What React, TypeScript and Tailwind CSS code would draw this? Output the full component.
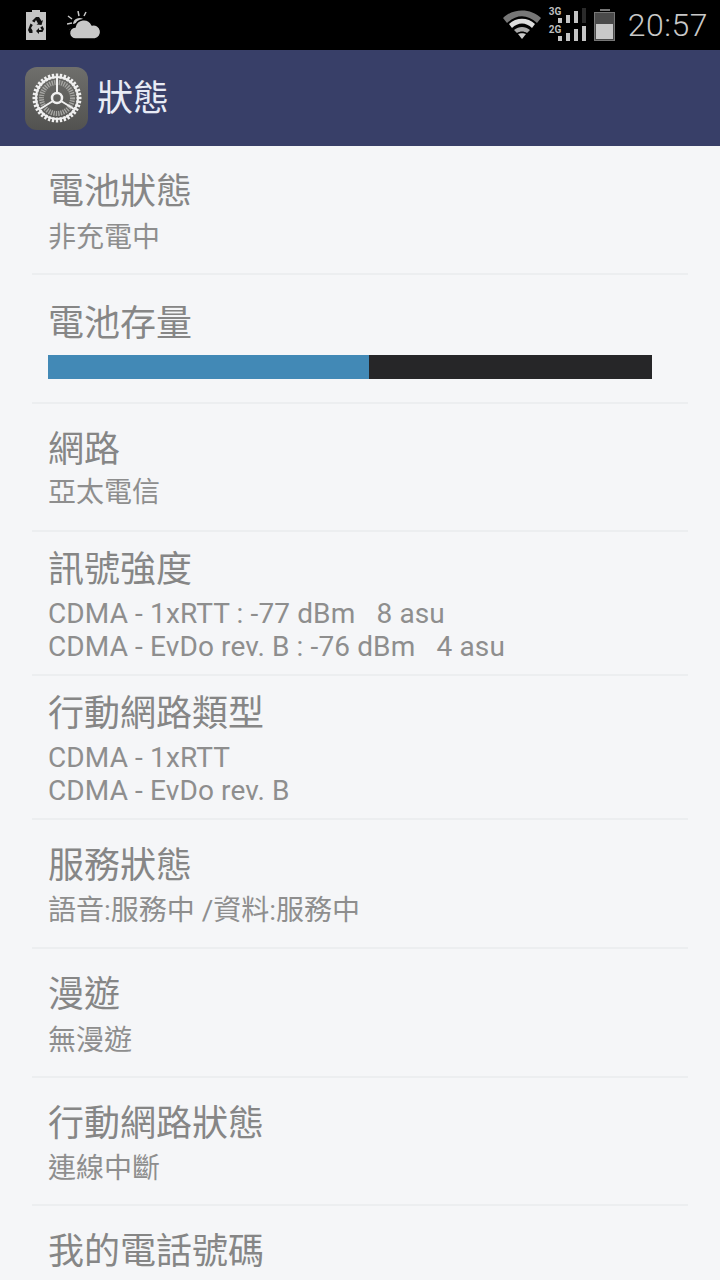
import React from "react";

const sans = "font-['Roboto','Noto_Sans_CJK_TC',sans-serif]";

type Row = { title: string; lines?: string[]; level?: number; box: string; gap?: string; latin?: boolean };

const rows: Row[] = [
  { title: "電池狀態", lines: ["非充電中"], box: "h-[129px] pt-[26px]", gap: "mt-[9px]" },
  { title: "電池存量", level: 53.2, box: "h-[129px] pt-[29px]", gap: "mt-[11px]" },
  { title: "網路", lines: ["亞太電信"], box: "h-[128px] pt-[26px]", gap: "mt-[6px]" },
  {
    title: "訊號強度",
    lines: ["CDMA - 1xRTT : -77 dBm\u00a0\u00a0\u00a08 asu", "CDMA - EvDo rev. B : -76 dBm\u00a0\u00a0\u00a04 asu"],
    box: "h-[144px] pt-[18px]",
    gap: "mt-[7px]",
    latin: true,
  },
  {
    title: "行動網路類型",
    lines: ["CDMA - 1xRTT", "CDMA - EvDo rev. B"],
    box: "h-[144px] pt-[18px]",
    gap: "mt-[7px]",
    latin: true,
  },
  { title: "服務狀態", lines: ["語音:服務中 /資料:服務中"], box: "h-[129px] pt-[26px]", gap: "mt-[8px]" },
  { title: "漫遊", lines: ["無漫遊"], box: "h-[129px] pt-[26px]", gap: "mt-[9px]" },
  { title: "行動網路狀態", lines: ["連線中斷"], box: "h-[128px] pt-[26px]", gap: "mt-[8px]" },
  { title: "我的電話號碼", box: "h-[75px] pt-[26px]" },
];

function RecycleBattery() {
  return (
    <svg width="20" height="30" viewBox="0 0 20 30">
      <path d="M6 0h8v2h6v28H0V2h6z" fill="#c4c4c4" />
      <path
        d="M10 7l3 0 2.5 4 1.5-1-1.5 5-5-.5 1.5-1-2-3.5-1.5 2.5-2.5-1.5zM16.5 16l1.5 3-1.5 3H13v2l-3-3 3-3v2h2.8l-1.5-2.5zM4.5 13.5L6.8 15 5 18l1.5 2.5V23H3.5L2 20z"
        fill="#111"
      />
    </svg>
  );
}

function Weather() {
  return (
    <svg width="35" height="29" viewBox="0 0 35 29">
      <g stroke="#c8c8c8" strokeWidth="1.5">
        <path d="M11 0l1 5M1 5l4 3M0 13l5-1M19 1l-2 4M3 19l4-2" />
      </g>
      <path d="M6 13a6.5 6.5 0 0 1 12-3z" fill="#c8c8c8" />
      <path d="M9 28a6 6 0 0 1 -1-12 9 9 0 0 1 17-2 7 7 0 0 1 3 14z" fill="#c8c8c8" stroke="#000" strokeWidth="1.5" />
    </svg>
  );
}

function Wifi() {
  return (
    <svg width="38" height="30" viewBox="0 0 38 30">
      <path d="M0 8C10-2 28-2 38 8l-4 5C24 4 14 4 4 13z" fill="#777" />
      <path d="M6 14C13 7 25 7 32 14l-3 4C23 12 15 12 9 18z" fill="#ddd" />
      <path d="M11 20c5-4 11-4 16 0l-3 3c-3-2-7-2-10 0z" fill="#aaa" />
      <path d="M15 24c2-1 6-1 8 0l-4 5z" fill="#ccc" />
    </svg>
  );
}

function Signal({ label, faded }: { label: string; faded?: boolean }) {
  const bars = [5, 8, 12, 15];
  return (
    <div className="relative w-[37px] h-[15px]">
      <span className="absolute left-0 top-[-1px] text-[10px] leading-[10px] font-bold text-[#bdbdbd] font-['Roboto',sans-serif]">
        {label}
      </span>
      <div className="absolute right-0 bottom-0 flex items-end gap-[4px]">
        {bars.map((b, i) => (
          <div
            key={b}
            className={faded && i === 3 ? "w-[4px] bg-[#2a2a2a]" : "w-[4px] bg-[#c4c4c4]"}
            style={{ height: b }}
          />
        ))}
      </div>
    </div>
  );
}

function Battery() {
  return (
    <div className="flex flex-col items-center w-[22px]">
      <div className="w-[10px] h-[2px] bg-[#777]" />
      <div className="w-[21px] h-[29px] mt-[1px] border border-[#777] flex flex-col justify-end bg-[#4a4a4a] p-[1px]">
        <div className="h-[15px] bg-[#c8c8c8]" />
      </div>
    </div>
  );
}

function GearIcon() {
  const teeth = Array.from({ length: 36 }, (_, i) => i * 10);
  return (
    <div className="w-[63px] h-[63px] rounded-[12px] bg-gradient-to-b from-[#6f6f6c] to-[#525250] flex items-center justify-center">
      <svg width="50" height="50" viewBox="0 0 50 50">
        {teeth.map((a) => (
          <rect key={a} x="23.8" y="0.5" width="2.4" height="5" fill="#f0f0f0" transform={`rotate(${a} 25 25)`} />
        ))}
        <circle cx="25" cy="25" r="21" fill="none" stroke="#f0f0f0" strokeWidth="2" />
        <circle cx="25" cy="25" r="15.5" fill="none" stroke="#a5a5a2" strokeWidth="5" strokeDasharray="1.4 1" />
        <path d="M25 5v15M21 28L8 36M29 28l13 8" stroke="#f0f0f0" strokeWidth="2" />
        <circle cx="25" cy="25" r="5" fill="none" stroke="#f0f0f0" strokeWidth="2.5" />
      </svg>
    </div>
  );
}

export default function App() {
  return (
    <div className={`w-[720px] h-[1280px] overflow-hidden flex flex-col bg-[#f5f6f8] ${sans}`}>
      {/* Status bar */}
      <div className="h-[50px] bg-black flex items-center justify-between pl-[26px] pr-[12px]">
        <div className="flex items-center gap-[21px]">
          <RecycleBattery />
          <Weather />
        </div>
        <div className="flex items-center">
          <Wifi />
          <div className="flex flex-col gap-[3px] ml-[8px] mb-[2px]">
            <Signal label="3G" faded />
            <Signal label="2G" />
          </div>
          <div className="ml-[8px]">
            <Battery />
          </div>
          <span className="ml-[12px] text-[32px] leading-none text-[#c8c8c8] font-light tracking-[0.5px]">20:57</span>
        </div>
      </div>

      {/* Action bar */}
      <div className="h-[96px] bg-[#383f68] flex items-center pl-[25px]">
        <GearIcon />
        <span className="ml-[9px] pt-[2px] text-[36px] leading-none text-[#e8ebf5]">狀態</span>
      </div>

      {/* Status rows */}
      <div className="flex-1 overflow-hidden flex flex-col px-[32px]">
        {rows.map((r) => (
          <div key={r.title} className={`${r.box} shrink-0 border-b-2 border-[#eceef0] last:border-b-0`}>
            <div className="pl-[16px] text-[36px] leading-[40px] text-[#868686]">{r.title}</div>
            {r.lines && (
              <div className={`pl-[16px] ${r.gap}`}>
                {r.lines.map((l) => (
                  <div
                    key={l}
                    className={
                      r.latin
                        ? "text-[28px] leading-[33px] tracking-[0.12px] text-[#8e8e8e]"
                        : "text-[28px] leading-[33px] text-[#8e8e8e]"
                    }
                  >
                    {l}
                  </div>
                ))}
              </div>
            )}
            {r.level !== undefined && (
              <div className={`ml-[16px] mr-[36px] ${r.gap} h-[24px] bg-[#262628]`}>
                <div className="h-full bg-[#4289b6]" style={{ width: `${r.level}%` }} />
              </div>
            )}
          </div>
        ))}
      </div>
    </div>
  );
}
